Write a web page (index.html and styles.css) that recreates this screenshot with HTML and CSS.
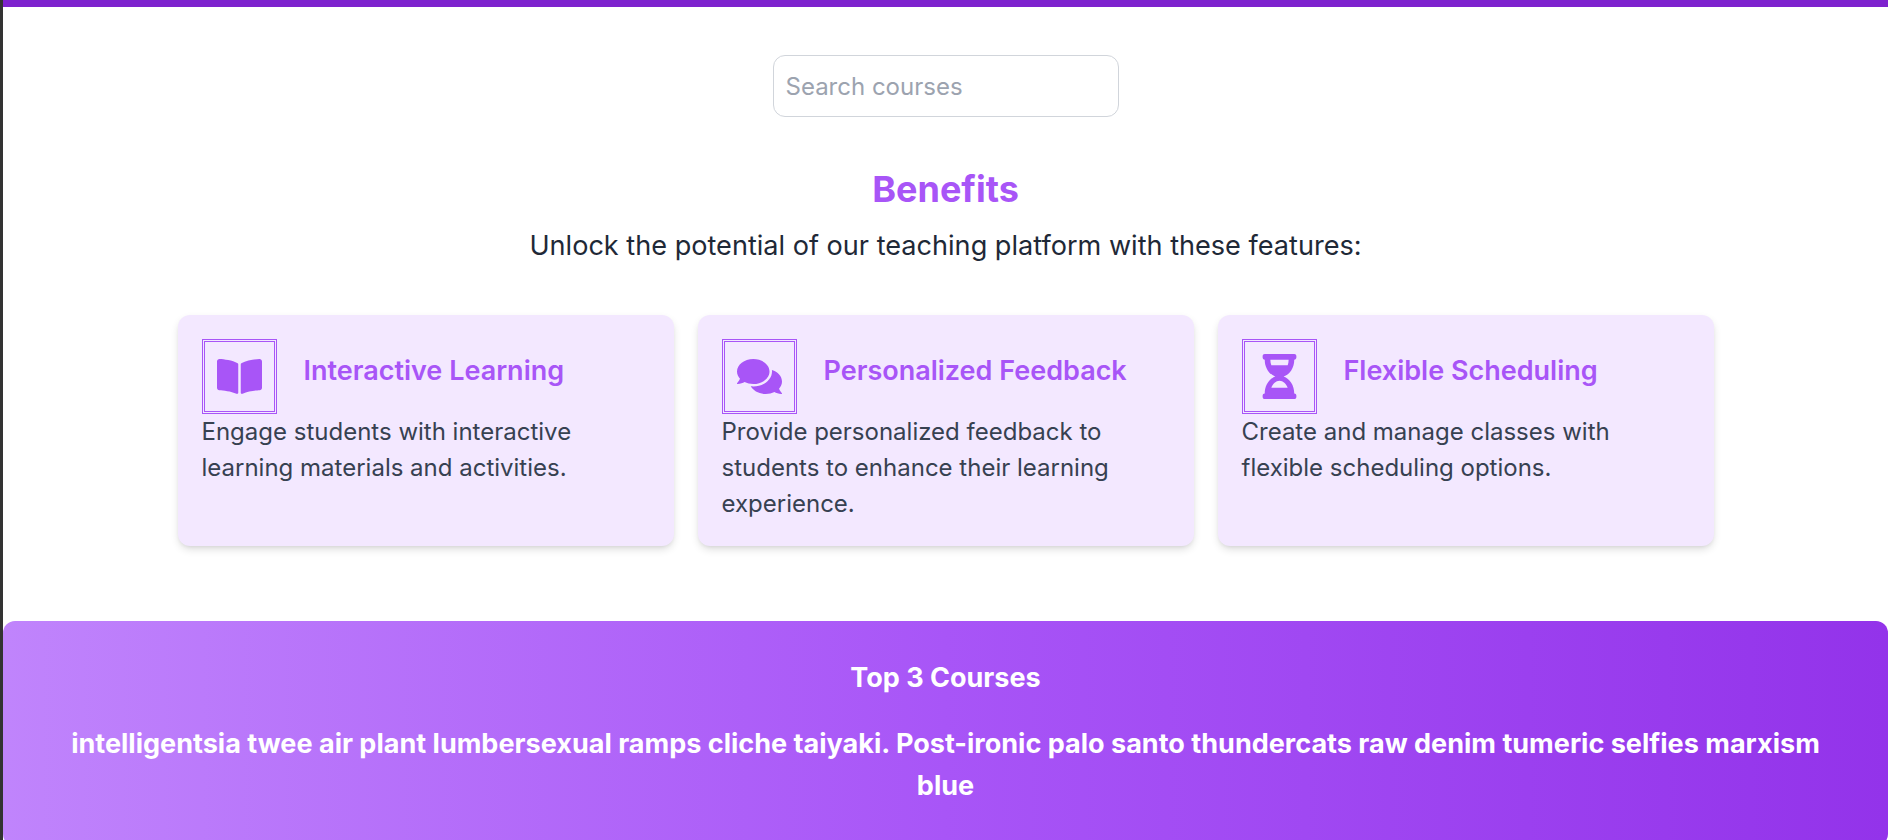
FILE: index.html
```html
<!DOCTYPE html>
<html lang="en">
<head>
  <meta charset="UTF-8">
  <title>Benefits</title>
  <link rel="stylesheet" href="styles.css">
</head>
<body>
<div class="page">
  <div class="edge"></div>
  <div class="main">
    <div class="topbar"></div>

    <div class="search-row">
      <input class="search" type="text" placeholder="Search courses">
    </div>

    <h2 class="benefits-title">Benefits</h2>
    <p class="benefits-sub">Unlock the potential of our teaching platform with these features:</p>

    <div class="cards">
      <div class="card">
        <div class="card-head">
          <div class="icon-box">
            <svg class="icon" viewBox="0 0 576 512"><path d="M542.22 32.05c-54.8 3.11-163.72 14.43-230.96 55.59-4.64 2.84-7.27 7.89-7.27 13.17v363.87c0 11.55 12.63 18.85 23.28 13.49 69.18-34.82 169.23-44.32 218.7-46.92 16.89-.89 30.02-14.43 30.02-30.66V62.75c.01-17.71-15.35-31.74-33.77-30.7zM264.73 87.64C197.5 46.48 88.58 35.17 33.78 32.05 15.36 31.01 0 45.04 0 62.75V400.6c0 16.24 13.13 29.78 30.02 30.66 49.49 2.6 149.59 12.11 218.77 46.95 10.62 5.35 23.21-1.94 23.21-13.46V100.63c0-5.29-2.62-10.14-7.27-12.99z"/></svg>
          </div>
          <h3>Interactive Learning</h3>
        </div>
        <p>Engage students with interactive learning materials and activities.</p>
      </div>

      <div class="card">
        <div class="card-head">
          <div class="icon-box">
            <svg class="icon" viewBox="0 0 576 512"><path d="M416 192c0-88.4-93.1-160-208-160S0 103.6 0 192c0 34.3 14.1 65.9 38 92-13.4 30.2-35.5 54.2-35.8 54.5-2.2 2.3-2.8 5.7-1.5 8.7S4.8 352 8 352c36.6 0 66.9-12.3 88.7-25 32.2 15.7 70.3 25 111.3 25 114.9 0 208-71.6 208-160zm122 220c23.9-26 38-57.7 38-92 0-66.9-53.5-124.2-129.3-148.1.9 6.6 1.3 13.3 1.3 20.1 0 105.9-107.7 192-240 192-10.8 0-21.3-.8-31.7-1.9C207.8 439.6 281.8 480 368 480c41 0 79.1-9.2 111.3-25 21.8 12.7 52.1 25 88.7 25 3.2 0 6.1-1.9 7.3-4.8 1.3-2.9.7-6.3-1.5-8.7-.3-.3-22.4-24.2-35.8-54.5z"/></svg>
          </div>
          <h3>Personalized Feedback</h3>
        </div>
        <p>Provide personalized feedback to students to enhance their learning experience.</p>
      </div>

      <div class="card">
        <div class="card-head">
          <div class="icon-box">
            <svg class="icon" viewBox="0 0 384 512"><path d="M360 0H24C10.745 0 0 10.745 0 24v16c0 13.255 10.745 24 24 24 0 90.975 51.02 167.754 120.824 192C75.02 280.246 24 357.025 24 448c-13.255 0-24 10.745-24 24v16c0 13.255 10.745 24 24 24h336c13.255 0 24-10.745 24-24v-16c0-13.255-10.745-24-24-24 0-90.975-51.02-167.754-120.824-192C308.98 231.754 360 154.975 360 64c13.255 0 24-10.745 24-24V24c0-13.255-10.745-24-24-24zm-75.078 384H99.08c17.059-46.797 52.096-80 92.92-80 40.821 0 75.862 33.196 92.922 80zm.019-256H99.078C91.988 108.548 88 86.748 88 64h208c0 22.805-3.987 44.587-11.059 64z"/></svg>
          </div>
          <h3>Flexible Scheduling</h3>
        </div>
        <p>Create and manage classes with flexible scheduling options.</p>
      </div>
    </div>

    <div class="banner">
      <h3>Top 3 Courses</h3>
      <p>intelligentsia twee air plant lumbersexual ramps cliche taiyaki. Post-ironic palo santo thundercats raw denim tumeric selfies marxism blue</p>
    </div>
  </div>
</div>
</body>
</html>
```

FILE: styles.css
```css
body {
  margin: 0;
  font-family: Inter, "Liberation Sans", sans-serif;
  background-color: white;
}
.page {
  display: flex;
  height: 840px;
  overflow: hidden;
}
.edge {
  width: 3px;
  flex-shrink: 0;
  background-color: #333333;
}
.main {
  flex: 1;
  min-width: 0;
  display: flex;
  flex-direction: column;
  align-items: center;
}
.topbar {
  width: 100%;
  height: 7px;
  flex-shrink: 0;
  background-color: #7e22ce;
}
.search-row {
  margin-top: 48px;
}
.search {
  display: block;
  box-sizing: border-box;
  width: 346px;
  height: 62px;
  padding: 0 12px;
  font-family: inherit;
  font-size: 24px;
  color: #111827;
  background: white;
  border: 1px solid #d1d5db;
  border-radius: 12px;
}
.search::placeholder {
  color: #9ca3af;
}
.benefits-title {
  margin: 52px 0 0;
  font-size: 36px;
  line-height: 40px;
  font-weight: 700;
  color: #a855f7;
}
.benefits-sub {
  margin: 17px 0 0;
  font-size: 27.1px;
  line-height: 40px;
  color: #1f2937;
}
.cards {
  width: 1536px;
  margin-top: 49px;
  display: grid;
  grid-template-columns: repeat(3, 1fr);
  gap: 24px;
}
.card {
  padding: 24px;
  background-color: #f3e8ff;
  border-radius: 12px;
  box-shadow: 0 4px 8px -1px rgba(0,0,0,0.14), 0 2px 4px -2px rgba(0,0,0,0.1);
}
.card-head {
  display: flex;
  align-items: center;
  gap: 27px;
}
.card-head h3 {
  margin: 0 0 12px;
  font-size: 27px;
  line-height: 36px;
  font-weight: 600;
  color: #a855f7;
}
.icon-box {
  flex-shrink: 0;
  display: flex;
  padding: 12px;
  border: 3px double #a855f7;
}
.icon {
  display: block;
  width: 45px;
  height: 45px;
  fill: #a855f7;
}
.card p {
  margin: 0;
  font-size: 24px;
  line-height: 36px;
  color: #374151;
}
.banner {
  align-self: stretch;
  margin-top: 75px;
  padding: 39px 48px;
  text-align: center;
  color: white;
  background: linear-gradient(to right, #c084fc, #a855f7, #9333ea);
  border-radius: 12px;
}
.banner h3 {
  margin: 0;
  font-size: 27px;
  line-height: 36px;
  font-weight: 700;
}
.banner p {
  margin: 27px 0 0;
  font-size: 27.04px;
  line-height: 42px;
  font-weight: 700;
}
```
